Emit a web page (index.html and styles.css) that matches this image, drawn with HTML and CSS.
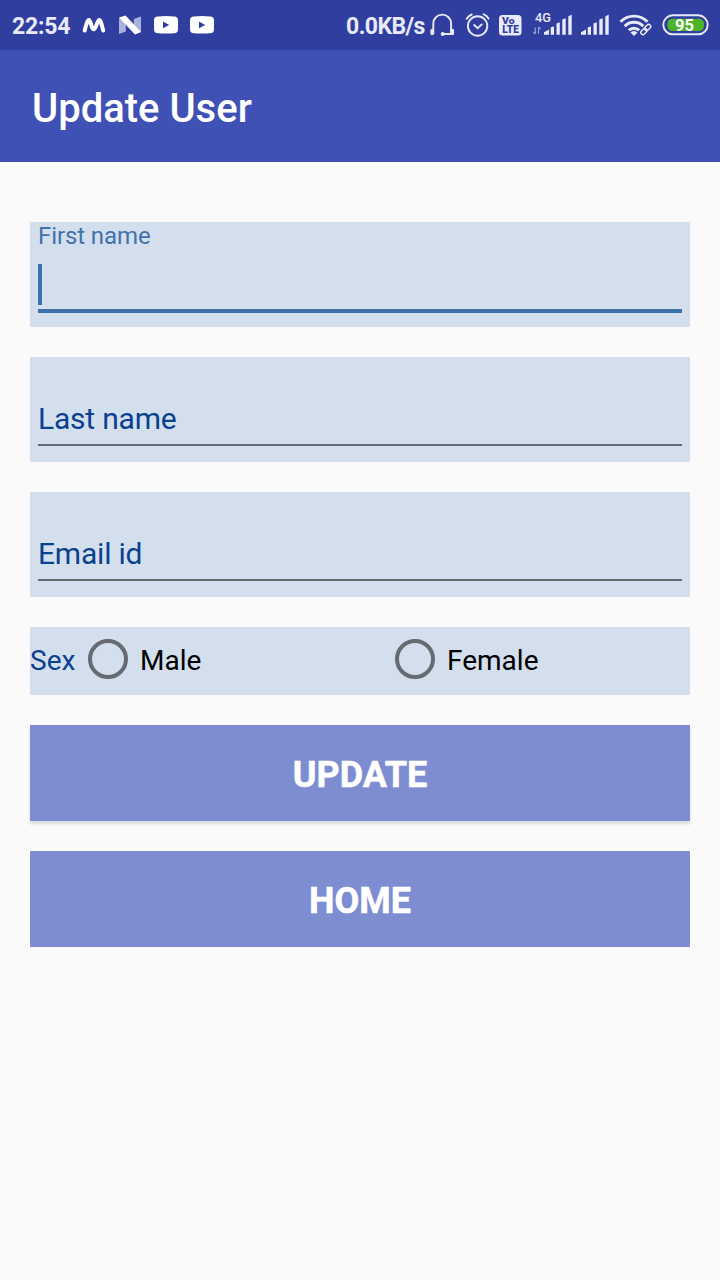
FILE: index.html
```html
<!DOCTYPE html>
<html lang="en">
<head>
<meta charset="utf-8">
<title>Update User</title>
<link rel="stylesheet" href="styles.css">
</head>
<body>
<div class="status">
  <div class="status-left">
    <span class="clock">22:54</span>
    <svg class="icon" width="24" height="50" viewBox="82 0 24 50"><path d="M84.700 30.500C85.800 26.500 87.200 20 89 20C90.800 20 91.300 29.300 93.700 29.300C96.100 29.300 97.200 20 99.200 20C101 20 102 26.500 103.200 30.500" fill="none" stroke="#fff" stroke-width="4" stroke-linecap="round"/></svg>
    <svg class="icon" width="24" height="50" viewBox="118 0 24 50"><path d="M119 18l6.800 4v9.500l-6.800 2.500zM133.800 19l7.200-2.500v16l-7.200-4.500z" fill="#a9b1dc"/><path d="M119 17.500l6.500-2 15.500 16.500-6 2.500z" fill="#fff"/></svg>
    <svg class="icon" width="24" height="50" viewBox="154 0 24 50"><path d="M158 16.600q8-1 16 0q4 .2 4 4v8.800q0 3.400-4 3.800q-8 .7-16 0q-4-.4-4-3.800v-8.800q0-3.800 4-4z" fill="#fff"/><path d="M163 21.500v6.800l6.200-3.400z" fill="#303f9f"/></svg>
    <svg class="icon" width="24" height="50" viewBox="154 0 24 50"><path d="M158 16.600q8-1 16 0q4 .2 4 4v8.800q0 3.400-4 3.800q-8 .7-16 0q-4-.4-4-3.800v-8.800q0-3.800 4-4z" fill="#fff"/><path d="M163 21.500v6.800l6.200-3.400z" fill="#303f9f"/></svg>
  </div>
  <div class="status-right">
    <span class="speed">0.0KB/s</span>
    <svg width="26" height="50" viewBox="429 0 26 50" fill="none" stroke="#e8eafa"><path d="M433.300 34v-10.500a8.900 8.900 0 0 1 17.800 0v10.500h-8" stroke-width="1.900"/><path d="M432.200 30.500v3M452.300 30.500v3" stroke-width="3.600" stroke-linecap="round"/><circle cx="442.700" cy="34" r="2" fill="#e8eafa" stroke="none"/></svg>
    <svg width="26" height="50" viewBox="465 0 26 50" fill="none" stroke="#e8eafa" stroke-linecap="round"><circle cx="477.600" cy="26" r="9.700" stroke-width="1.900"/><path d="M474.200 25l3.500 3.200 4-3.800" stroke-width="1.900"/><path d="M466.700 18.800q1.800-3 5-4.300M483.700 14.400q3.300 1.200 4.800 4.200" stroke-width="2"/></svg>
    <svg width="24" height="50" viewBox="498 0 24 50"><rect x="499" y="15" width="22.500" height="20.500" rx="3.500" fill="#e8eafa"/><text class="volte" x="502" y="24" textLength="12.500" lengthAdjust="spacingAndGlyphs">Vo</text><text class="volte" x="502.300" y="33" textLength="16.500" lengthAdjust="spacingAndGlyphs">LTE</text></svg>
    <svg width="42" height="50" viewBox="531 0 42 50" fill="#e8eafa"><text class="network" x="535" y="22" textLength="16" lengthAdjust="spacingAndGlyphs">4G</text><path d="M535.300 34v-6.500M533.400 32l1.900 2.200M538.500 27v7M538.500 27l2 2.300" fill="none" stroke="#969fd2" stroke-width="1.200"/><path d="M544 34.700v-2.400l5-2.700v5.100zM550.700 27.500l3.300-1.300v8.500h-3.300zM556.500 23.500l3.300-1.300v12.500h-3.300zM562.300 19.500l3.400-1.300v16.500h-3.400zM568.300 16.500l3.400-2v20.200h-3.400z"/></svg>
    <svg width="30" height="50" viewBox="580 0 30 50" fill="#e8eafa"><path d="M581 34.700v-2.400l5-2.700v5.100zM587.700 27.500l3.300-1.300v8.500h-3.300zM593.500 23.500l3.300-1.300v12.500h-3.300zM599.300 19.500l3.400-1.300v16.500h-3.400zM605.300 16.500l3.400-2v20.200h-3.400z"/></svg>
    <svg width="34" height="50" viewBox="619 0 34 50" fill="none" stroke="#e8eafa" stroke-width="2.900"><path d="M620.500 21.800a19 19 0 0 1 27 0M624.700 26.200a13 13 0 0 1 18.600 0M628.800 30.300a7.500 7.500 0 0 1 10.400 0"/><path d="M630.500 32.500a4.800 4.800 0 0 1 7 0l-3.500 3.400z" fill="#e8eafa" stroke="none"/><g stroke="#303f9f" stroke-width="3"><rect x="645" y="24.400" width="4.600" height="7.500" rx="2.300" transform="rotate(45 647.300 28.200)"/><rect x="641.600" y="28" width="4.600" height="7.500" rx="2.300" transform="rotate(45 643.900 31.800)"/></g><g stroke-width="1.400"><rect x="645.500" y="24" width="4.200" height="7" rx="2.100" transform="rotate(45 647.600 27.500)"/><rect x="641.800" y="28" width="4.200" height="7" rx="2.100" transform="rotate(45 643.900 31.500)"/></g></svg>
    <svg width="48" height="50" viewBox="662 0 48 50"><rect x="663.300" y="15.300" width="44.400" height="19" rx="9.500" fill="#303f9f" stroke="#e8eafa" stroke-width="1.900"/><rect x="667.500" y="18.700" width="36.500" height="12.400" rx="5" fill="#4db428"/><text class="charge" x="675" y="31.200" textLength="19" lengthAdjust="spacingAndGlyphs">95</text></svg>
  </div>
</div>
<header class="appbar"><h1 class="title">Update User</h1></header>
<main class="form">
  <div class="field active">
    <label class="float-label">First name</label>
    <div class="input"><span class="caret"></span></div>
  </div>
  <div class="field"><label class="hint">Last name</label></div>
  <div class="field"><label class="hint">Email id</label></div>
  <div class="sex">
    <span class="sex-label">Sex</span>
    <div class="option"><span class="radio"></span><span>Male</span></div>
    <div class="option"><span class="radio"></span><span>Female</span></div>
  </div>
  <button class="button">UPDATE</button>
  <button class="button flat">HOME</button>
</main>
</body>
</html>
```
FILE: styles.css
```css
* { box-sizing: border-box; }
body {
  margin: 0;
  min-height: 1280px;
  background: #fafafa;
  font-family: Roboto, sans-serif;
}
svg { display: block; flex: none; }
.status {
  display: flex;
  justify-content: space-between;
  height: 50px;
  padding: 0 10px 0 12px;
  background: #303f9f;
  color: #e8eafa;
  font-size: 23px;
  line-height: 53px;
  font-weight: 700;
  white-space: nowrap;
}
.status-left, .status-right { display: flex; }
.status-left { gap: 12px; }
.clock { width: 58px; letter-spacing: -.2px; }
.speed { width: 83px; letter-spacing: -.55px; }
.status-right svg + svg { margin-left: 9px; }
.status-right svg:nth-of-type(2) { margin-left: 10px; }
.status-right svg:nth-of-type(3) { margin-left: 7px; }
.status-right svg:nth-of-type(5) { margin-left: 7px; }
.volte { font: 900 10px/10px Roboto, sans-serif; fill: #303f9f; }
.volte:first-of-type { font-size: 9px; line-height: 9px; }
.network { font: 500 12px Roboto, sans-serif; }
.charge { font: 700 17px Roboto, sans-serif; fill: #fff; }
.appbar {
  height: 112px;
  padding: 35px 32px 0;
  background: #3f51b5;
}
.title {
  margin: 0;
  color: #fff;
  font-size: 40px;
  line-height: 48px;
  font-weight: 500;
}
.form {
  display: flex;
  flex-direction: column;
  gap: 30px;
  padding: 60px 30px;
}
.field {
  display: flex;
  flex-direction: column;
  justify-content: flex-end;
  height: 105px;
  padding: 0 8px 16px;
  background: #d4dfee;
}
.hint {
  height: 45px;
  border-bottom: 2px solid #64696f;
  color: #0a418e;
  font-size: 30px;
  line-height: 36px;
  letter-spacing: -.2px;
}
.active { padding-bottom: 14px; }
.float-label {
  color: #4272ab;
  font-size: 24px;
  line-height: 28px;
  letter-spacing: -.1px;
}
.input {
  height: 49px;
  margin-top: 14px;
  border-bottom: 4px solid #3e70a9;
}
.caret {
  display: block;
  width: 4px;
  height: 41px;
  background: #3e70a9;
}
.sex {
  display: grid;
  grid-template-columns: 54px 307px 1fr;
  height: 68px;
  background: #d4dfee;
  font-size: 28px;
  line-height: 68px;
}
.sex-label { color: #0a418e; }
.option { display: flex; gap: 12px; padding-left: 4px; }
.radio {
  width: 40px;
  height: 40px;
  margin-top: 12px;
  border: 4px solid #656b71;
  border-radius: 50%;
}
.button {
  height: 96px;
  padding: 4px 0 0;
  border: 0;
  background: #7e8dd2;
  box-shadow: 0 3px 3px rgba(0, 0, 0, .12);
  color: #fff;
  font: 700 36px/42px Roboto, sans-serif;
  -webkit-text-stroke: .5px #fff;
}
.flat { box-shadow: none; }
```
